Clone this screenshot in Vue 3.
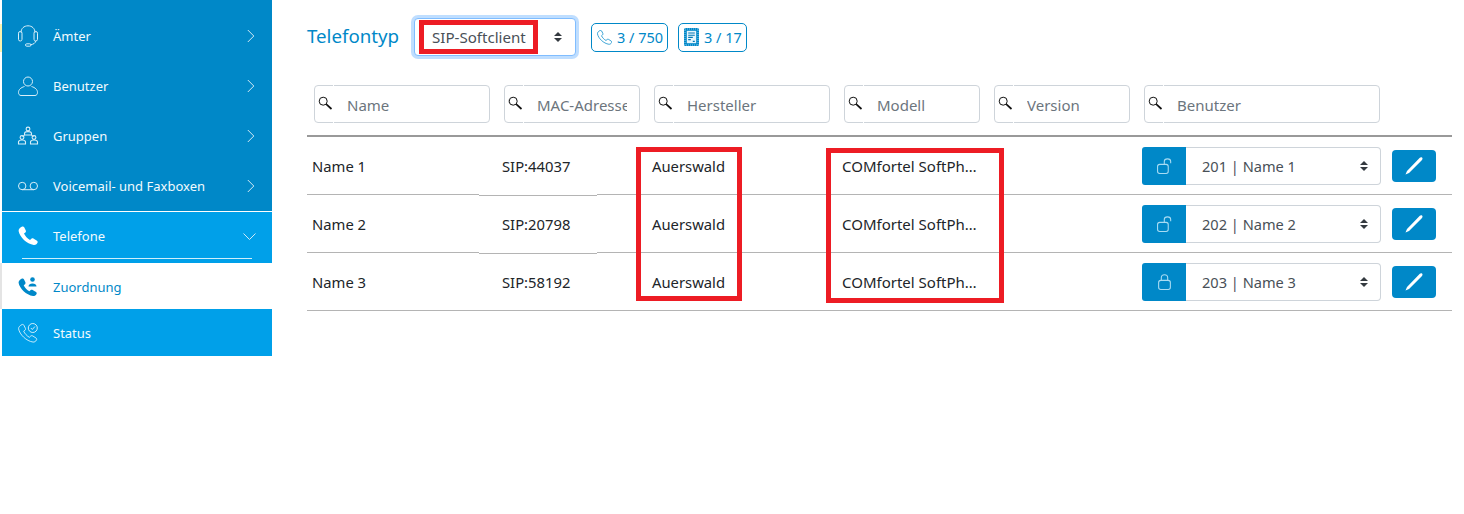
<script setup>
const filters = [
  { label: 'Name' },
  { label: 'MAC-Adresse' },
  { label: 'Hersteller' },
  { label: 'Modell' },
  { label: 'Version' },
  { label: 'Benutzer' },
]
const rows = [
  { name: 'Name 1', mac: 'SIP:44037', user: '201 | Name 1', locked: false, shifted: true },
  { name: 'Name 2', mac: 'SIP:20798', user: '202 | Name 2', locked: false, shifted: true },
  { name: 'Name 3', mac: 'SIP:58192', user: '203 | Name 3', locked: true, shifted: false },
]
const PHONE = 'M4.2 .6C5 .2 5.8 .5 6.2 1.3L7.8 4.6C8.1 5.3 8 6 7.4 6.5L6 7.6C7 10 9.6 12.8 12 14L13.4 12.7C14 12.2 14.8 12.1 15.4 12.5L19 14.8C19.7 15.3 19.9 16.1 19.5 16.8C18.7 18.3 17.3 19.2 15.8 19C8.8 18 1.6 11 .6 5C.4 3.2 2.4 1.4 4.2 .6Z'
</script>

<template>
  <div class="page">
    <div class="strip">
      <i class="s-a"></i><i class="s-b"></i><i class="s-c"></i><i class="s-d"></i>
    </div>

    <nav class="sidebar">
      <div class="group-dark">
        <a class="item">
          <svg class="ico tall" viewBox="0 0 20 22" fill="none" stroke="currentColor" stroke-width="1">
            <path d="M3 7.500C3 3.500 6 .8 10 .8s7 2.700 7 6.700" />
            <rect x=".5" y="6.500" width="3.500" height="9.500" rx="1.700" />
            <rect x="16" y="6.500" width="3.500" height="9.500" rx="1.700" />
            <path d="M17.500 16c0 2.200-2 3.200-5 3.800" />
            <rect x="7.500" y="18.800" width="5.500" height="2.400" rx="1.200" />
          </svg>
          <span class="lbl">Ämter</span>
          <svg class="chev" viewBox="0 0 8 14" fill="none" stroke="currentColor"><path d="M.8 1l6 6-6 6" /></svg>
        </a>
        <a class="item">
          <svg class="ico" viewBox="0 0 20 20" fill="none" stroke="currentColor" stroke-width="1">
            <circle cx="10" cy="5.500" r="4.500" />
            <path d="M6.500 10.500C3 11.500.5 13.500.5 16.500c0 1.500.8 3 2.500 3h14c1.700 0 2.500-1.500 2.500-3 0-3-2.500-5-6-6" />
          </svg>
          <span class="lbl">Benutzer</span>
          <svg class="chev" viewBox="0 0 8 14" fill="none" stroke="currentColor"><path d="M.8 1l6 6-6 6" /></svg>
        </a>
        <a class="item">
          <svg class="ico" viewBox="0 0 20 20" fill="none" stroke="currentColor" stroke-width="1.100">
            <circle cx="10" cy="3" r="1.900" /><path d="M6.500 9V7.500C6.500 6.200 8 5.600 10 5.600s3.500.6 3.500 1.900V9z" />
            <circle cx="4" cy="11.500" r="1.900" /><path d="M.5 18v-2C.5 14.700 2 14 4 14s3.500.7 3.500 2v2z" />
            <circle cx="16" cy="11.500" r="1.900" /><path d="M12.500 18v-2c0-1.300 1.500-2 3.500-2s3.500.7 3.500 2v2z" />
            <path d="M6.500 9.500l-2 1M13.500 9.500l2 1" />
          </svg>
          <span class="lbl">Gruppen</span>
          <svg class="chev" viewBox="0 0 8 14" fill="none" stroke="currentColor"><path d="M.8 1l6 6-6 6" /></svg>
        </a>
        <a class="item">
          <svg class="ico" viewBox="0 0 20 10" fill="none" stroke="currentColor" stroke-width="1">
            <circle cx="4.200" cy="5" r="3.700" /><circle cx="15.800" cy="5" r="3.700" /><path d="M4.200 8.700h11.600" />
          </svg>
          <span class="lbl">Voicemail- und Faxboxen</span>
          <svg class="chev" viewBox="0 0 8 14" fill="none" stroke="currentColor"><path d="M.8 1l6 6-6 6" /></svg>
        </a>
      </div>

      <a class="item parent">
        <svg class="ico" viewBox="0 0 20 20"><path :d="PHONE" fill="currentColor" /></svg>
        <span class="lbl">Telefone</span>
        <svg class="chev-down" viewBox="0 0 13 7" fill="none" stroke="currentColor"><path d="M.5.5l6 6 6-6" /></svg>
      </a>
      <a class="sub active">
        <svg class="ico" viewBox="0 0 20 20">
          <g transform="translate(0 1) scale(.95)"><path :d="PHONE" fill="currentColor" /></g>
          <circle cx="14.500" cy="2.500" r="2.300" fill="currentColor" />
          <path d="M10.500 9.500c0-2 1.800-3 4-3s4 1 4 3z" fill="currentColor" />
        </svg>
        <span class="lbl">Zuordnung</span>
      </a>
      <a class="sub status">
        <svg class="ico" viewBox="0 0 20 20" fill="none" stroke="currentColor" stroke-width=".9">
          <g transform="translate(0 1) scale(.95)"><path :d="PHONE" /></g>
          <circle cx="14.800" cy="5" r="4.500" />
          <path d="M12.800 5l1.500 1.500 2.600-3" />
        </svg>
        <span class="lbl">Status</span>
      </a>
    </nav>

    <main class="main">
      <header class="head">
        <h1 class="title">Telefontyp</h1>
        <select class="type-select">
          <option>SIP-Softclient</option>
        </select>
        <span class="badge first">
          <svg class="badge-ico" viewBox="0 0 20 20" fill="none" stroke="currentColor" stroke-width="1"><path :d="PHONE" /></svg>
          3 / 750
        </span>
        <span class="badge second">
          <svg class="badge-doc" viewBox="0 0 15 18">
            <rect width="15" height="18" rx="1.500" fill="currentColor" />
            <rect x="1" y="1" width="13" height="16" fill="none" stroke="#bfe4f6" stroke-width=".7" stroke-dasharray="1 1" />
            <rect x="2.800" y="2.800" width="9.400" height="12.400" fill="#e6f5fc" />
            <path d="M4.200 5h6.600M4.200 7.200h6.600M4.200 9.400h4.600M4.200 11.600h2.600M8.800 13.400h2" stroke="#0077b3" stroke-width="1.100" />
          </svg>
          3 / 17
        </span>
      </header>

      <div class="grid filters">
        <div v-for="f in filters" :key="f.label" class="filter">
          <span class="search">
            <svg viewBox="0 0 15 15" width="15" height="15" fill="none" stroke="#111">
              <circle cx="5.200" cy="5.200" r="4" stroke-width="1" />
              <path d="M8.200 8.200l5.300 4.800" stroke-width="1.700" />
            </svg>
          </span>
          <input class="filter-input" :placeholder="f.label" />
        </div>
      </div>

      <div class="body">
        <div v-for="r in rows" :key="r.name" class="grid row" :class="{ shifted: r.shifted }">
          <div class="cell">{{ r.name }}</div>
          <div class="cell mac">{{ r.mac }}</div>
          <div class="cell">Auerswald</div>
          <div class="cell model"><span class="ell">COMfortel SoftPh…</span></div>
          <div class="cell"></div>
          <div class="cell user">
            <span class="lock">
              <svg v-if="!r.locked" viewBox="0 0 14 15" width="15" height="16" fill="none" stroke="currentColor">
                <rect x=".5" y="6" width="10" height="8.500" rx="2" />
                <path d="M6.800 6V3.300C6.800 1.800 8 .8 9.800.8s3 1 3 2.500V5" />
              </svg>
              <svg v-else viewBox="0 0 14 15" width="15" height="16" fill="none" stroke="currentColor">
                <rect x="1.500" y="6" width="11" height="8.500" rx="2" />
                <path d="M4 6V3.500C4 1.800 5.300.7 7 .7s3 1.100 3 2.800V6" />
              </svg>
            </span>
            <select class="user-select"><option>{{ r.user }}</option></select>
          </div>
          <div class="cell">
            <button class="edit" type="button" aria-label="Bearbeiten">
              <svg viewBox="0 0 18 18" width="18" height="18"><path d="M.5 17.500L2 14 14.800.8C15.500 0 16.500 0 17 .6c.8.7.6 1.700 0 2.400L4 16z" fill="#fff" /></svg>
            </button>
          </div>
        </div>
      </div>
    </main>

    <div class="mark mark-type"></div>
    <div class="mark mark-vendor"></div>
    <div class="mark mark-model"></div>
  </div>
</template>

<style>
html, body { background: #fff; }
</style>

<style scoped>
.page {
  position: relative;
  display: flex;
  width: 1464px;
  height: 514px;
  overflow: hidden;
  background: #fff;
  font-family: "Noto Sans", "Open Sans", sans-serif;
  color: #212529;
}
.strip { width: 2px; display: flex; flex-direction: column; flex: none; }
.strip i { display: block; }
.s-a { height: 24px; }
.s-b { height: 28px; background: #fbf3b0; }
.s-c { height: 211px; }
.s-d { height: 46px; background: #e4e4e4; }

.sidebar { width: 270px; flex: none; display: flex; flex-direction: column; font-size: 13px; }
.group-dark { background: #0088c8; padding-top: 11px; height: 211px; box-sizing: border-box; }
.item {
  display: flex;
  align-items: center;
  height: 50px;
  padding: 0 16px;
  color: #fff;
  position: relative;
}
.ico { width: 20px; height: 20px; flex: none; color: #d8eff9; overflow: visible; }
.tall { height: 22px; }
.lbl { margin-left: 15px; flex: 1; color: #f2fafd; }
.chev { width: 8px; height: 14px; color: #cfe9f6; margin-right: 1px; }
.chev-down { width: 13px; height: 7px; color: #cfe9f6; }
.parent {
  height: 51px;
  margin-top: 1px;
  background: #00a0e9;
  padding-bottom: 3px;
  box-sizing: border-box;
}
.parent .ico { color: #fff; }
.parent::after {
  content: "";
  position: absolute;
  left: 20px;
  right: 20px;
  bottom: 4px;
  height: 1px;
  background: #cfeefb;
}
.sub { display: flex; align-items: center; padding: 0 16px; box-sizing: border-box; }
.active { height: 46px; background: #fff; padding-top: 1px; }
.active .ico { color: #0088c8; }
.active .lbl { color: #0088c8; }
.status { height: 47px; background: #00a0e9; }
.status .ico { color: #e3f5fd; }

.main { width: 1145px; margin-left: 35px; flex: none; }
.head { display: flex; align-items: center; height: 38px; margin-top: 18px; }
.title {
  margin: 0 0 4px;
  width: 107px;
  font-size: 18.700px;
  font-weight: 400;
  color: #0088c8;
  white-space: nowrap;
}
select {
  appearance: none;
  font: inherit;
  color: #495057;
  background-color: #fff;
  background-image: url("data:image/svg+xml,%3Csvg xmlns='http://www.w3.org/2000/svg' width='8' height='10' viewBox='0 0 8 10'%3E%3Cpath d='M4 0L8 4H0zM4 10L0 6H8z' fill='%23343a40'/%3E%3C/svg%3E");
  background-repeat: no-repeat;
  outline: none;
}
.type-select {
  width: 162px;
  height: 38px;
  box-sizing: border-box;
  padding: 0 17px;
  font-size: 15.100px;
  border: 1px solid #80bdff;
  border-radius: 4px;
  box-shadow: 0 0 0 3px rgba(0, 123, 255, .25);
  background-position: right 13px center;
}
.badge {
  display: inline-flex;
  align-items: center;
  box-sizing: border-box;
  height: 29px;
  border: 1px solid #0088c8;
  border-radius: 5px;
  color: #0088c8;
  font-size: 14.500px;
  white-space: nowrap;
  padding: 0 4px 0 5px;
}
.first { width: 77px; margin-left: 15px; }
.second { width: 69px; margin-left: 10px; }
.badge-ico { width: 15px; height: 15px; margin-right: 5px; flex: none; }
.badge-doc { width: 15px; height: 18px; margin-right: 5px; flex: none; }

.grid { display: grid; grid-template-columns: 190px 150px 190px 150px 150px 250px 65px; }
.filters { margin-top: 29px; height: 50px; border-bottom: 2px solid #999; box-sizing: content-box; }
.filter {
  display: flex;
  height: 38px;
  box-sizing: border-box;
  margin: 0 7px;
  border: 1px solid #ced4da;
  border-radius: 4px;
  background: #fff;
}
.search {
  flex: none;
  width: 19px;
  height: 38px;
  margin-top: -1px;
  border-right: 1px solid #fff;
  padding: 11px 0 0 3px;
  box-sizing: border-box;
}
.search svg { display: block; }
.filter-input {
  flex: 1;
  min-width: 0;
  border: 0;
  outline: 0;
  padding: 1px 12px 0 13px;
  font: inherit;
  font-size: 15px;
  color: #495057;
  background: transparent;
}
.filter-input::placeholder { color: #6c757d; opacity: 1; }

.row { position: relative; height: 58px; border-bottom: 1px solid #b4b4b4; box-sizing: border-box; }
.shifted::after {
  content: "";
  position: absolute;
  left: 172px;
  width: 118px;
  bottom: -2px;
  border-top: 1px solid #fff;
  border-bottom: 1px solid #b4b4b4;
  height: 0;
}
.cell {
  display: flex;
  align-items: center;
  min-width: 0;
  padding: 0 5px;
  font-size: 14.800px;
}
.mac { padding-top: 1px; }
.model { padding-right: 0; font-size: 15px; }
.ell { display: block; white-space: nowrap; }
.user { padding-right: 6px; }
.lock {
  flex: none;
  width: 44px;
  height: 38px;
  display: flex;
  align-items: center;
  justify-content: center;
  background: #0088c8;
  color: #a9dcf3;
  border-radius: 3px 0 0 3px;
}
.user-select {
  flex: 1;
  min-width: 0;
  height: 38px;
  padding: 0 16px;
  font-size: 14.600px;
  border: 1px solid #ced4da;
  border-left: 0;
  border-radius: 0 4px 4px 0;
  background-position: right 12px center;
}
.edit {
  width: 44px;
  height: 32px;
  padding: 0;
  border: 0;
  border-radius: 4px;
  background: #0088c8;
  display: flex;
  align-items: center;
  justify-content: center;
}

.mark { position: absolute; box-sizing: border-box; border: 5px solid #ed1c24; pointer-events: none; }
.mark-type { left: 419px; top: 20px; width: 119px; height: 34px; }
.mark-vendor { left: 636px; top: 147px; width: 106px; height: 154px; }
.mark-model { left: 826px; top: 148px; width: 178px; height: 155px; }
</style>
